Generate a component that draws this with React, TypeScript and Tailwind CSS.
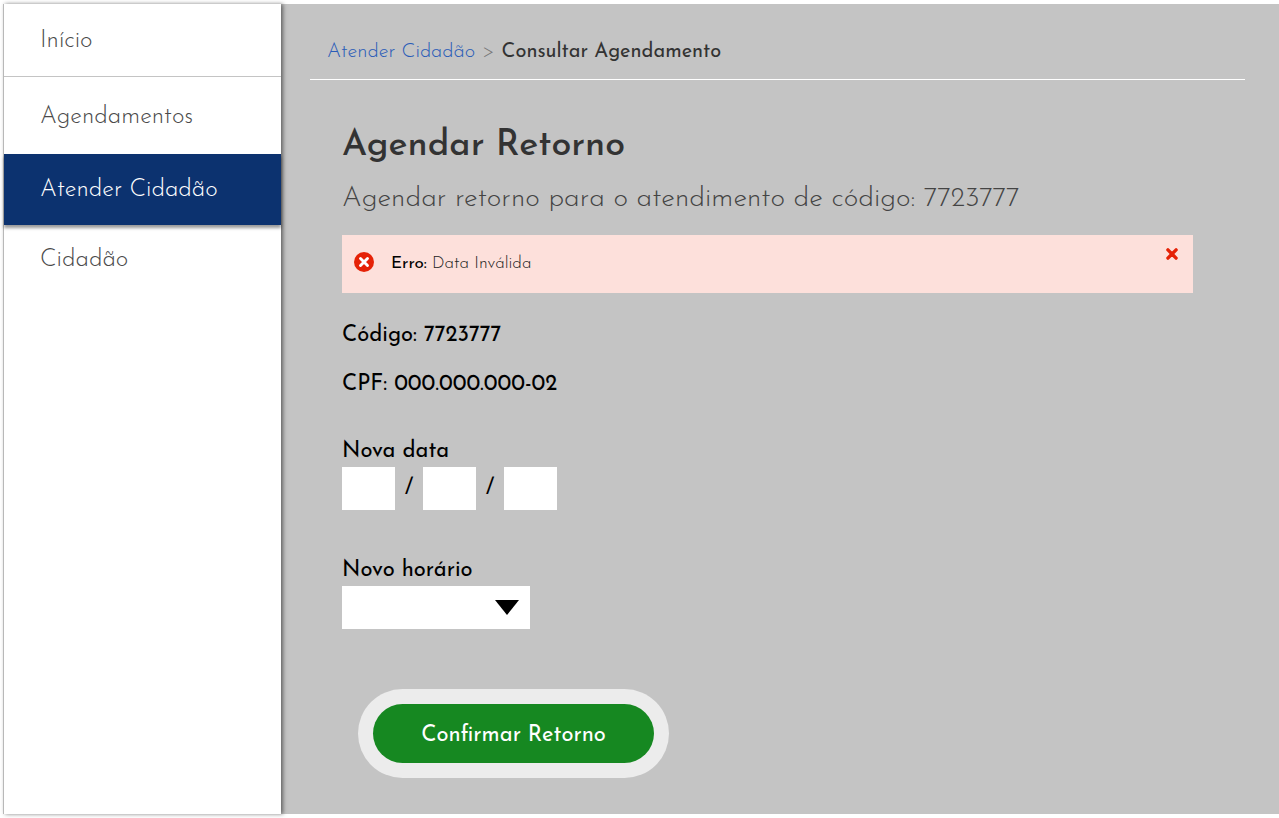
import { useState } from "react";

const menu = [
  { label: "Início", style: "h-[70px] pt-0.5 border-b border-[#c4c4c4] box-content text-[#4a4a4a]" },
  { label: "Agendamentos", style: "h-[77px] pt-0.5 text-[#4a4a4a]" },
  {
    label: "Atender Cidadão",
    style: "relative h-[71px] bg-[#0c326f] text-white shadow-[0_3px_3px_rgba(0,0,0,0.4)]",
    active: true,
  },
  { label: "Cidadão", style: "h-[70px] text-[#4a4a4a]" },
];

function Sidebar() {
  return (
    <nav
      aria-label="Menu principal"
      className="relative w-[278px] shrink-0 border-l border-[#b8b8b8] bg-white text-2xl font-light shadow-[2px_0_4px_rgba(0,0,0,0.5)]"
    >
      <ul>
        {menu.map((item) => (
          <li key={item.label}>
            <a
              href="#"
              aria-current={item.active ? "page" : undefined}
              className={`flex items-center pl-9 ${item.style}`}
            >
              {item.label}
            </a>
          </li>
        ))}
      </ul>
    </nav>
  );
}

function Cross({ className }: { className: string }) {
  return (
    <svg viewBox="0 0 12 12" className={className} aria-hidden="true">
      <path d="M2.5 2.5 9.5 9.5M9.5 2.5 2.5 9.5" stroke="currentColor" strokeWidth="2.9" strokeLinecap="round" />
    </svg>
  );
}

function ErrorAlert({ onClose }: { onClose: () => void }) {
  return (
    <div role="alert" className="mt-[18px] flex h-[58px] items-center bg-[#fde0db] px-3">
      <span className="mb-1 flex size-5 shrink-0 items-center justify-center rounded-full bg-[#e52207] text-white">
        <Cross className="size-3" />
      </span>
      <p className="ml-[17px] grow text-[17px] font-light text-[#222]">
        <strong className="font-normal text-black">Erro:</strong> Data Inválida
      </p>
      <button
        type="button"
        aria-label="Fechar"
        onClick={onClose}
        className="mt-2.5 flex size-[18px] cursor-pointer items-center justify-center self-start text-[#e52207]"
      >
        <Cross className="size-[14px]" />
      </button>
    </div>
  );
}

const dateBox = "h-[43px] w-[53px] bg-white text-center text-lg outline-none";

export default function App() {
  const [alertOpen, setAlertOpen] = useState(true);
  return (
    <div className="flex min-h-screen bg-white py-1 pl-[3px] font-['Josefin_Sans',Lato,sans-serif]">
      <Sidebar />
      <main className="min-w-0 grow bg-[#c4c4c4]">
        <nav
          aria-label="Trilha"
          className="mr-[34px] ml-[29px] flex h-19 items-center gap-[7px] border-b border-white pt-5 pl-[17px] text-xl"
        >
          <a href="#" className="font-light text-[#2a5cb8]">
            Atender Cidadão
          </a>
          <span className="font-light text-[#777]">&gt;</span>
          <span aria-current="page" className="font-normal text-[#333]">
            Consultar Agendamento
          </span>
        </nav>

        <div className="pt-[42px] pr-[86px] pl-[61px] text-[22px] leading-7 font-normal text-black">
          <h1 className="text-[36px] leading-12 font-medium text-[#333]">Agendar Retorno</h1>
          <p className="mt-[11px] text-[28px] leading-9 font-light text-[#444]">
            Agendar retorno para o atendimento de código: 7723777
          </p>
          {alertOpen && <ErrorAlert onClose={() => setAlertOpen(false)} />}

          <p className="mt-[29px]">Código: 7723777</p>
          <p className="mt-[21px]">CPF: 000.000.000-02</p>

          <form onSubmit={(e) => e.preventDefault()}>
            <fieldset className="mt-[39px]">
              <legend>Nova data</legend>
              <div className="mt-px flex items-center">
                <input aria-label="Dia" inputMode="numeric" maxLength={2} className={dateBox} />
                <span className="w-7 text-center">/</span>
                <input aria-label="Mês" inputMode="numeric" maxLength={2} className={dateBox} />
                <span className="w-7 text-center">/</span>
                <input aria-label="Ano" inputMode="numeric" maxLength={4} className={dateBox} />
              </div>
            </fieldset>

            <label htmlFor="horario" className="mt-[47px] block">
              Novo horário
            </label>
            <div className="relative mt-px h-[43px] w-[188px]">
              <select
                id="horario"
                defaultValue=""
                className="block size-full appearance-none bg-white pr-10 pl-3 text-lg outline-none"
              >
                <option value=""></option>
                <option>08:00</option>
                <option>09:00</option>
                <option>10:00</option>
              </select>
              <svg
                viewBox="0 0 24 15"
                aria-hidden="true"
                className="pointer-events-none absolute top-[14px] right-[11px] h-[15px] w-6"
              >
                <path d="M0 0H24L12 15Z" />
              </svg>
            </div>

            <button
              type="submit"
              className="mt-[75px] mb-9 ml-[31px] flex h-[59px] w-[281px] cursor-pointer items-center justify-center rounded-full bg-[#168821] pt-1 text-white ring-[15px] ring-[#ececec]"
            >
              Confirmar Retorno
            </button>
          </form>
        </div>
      </main>
    </div>
  );
}
